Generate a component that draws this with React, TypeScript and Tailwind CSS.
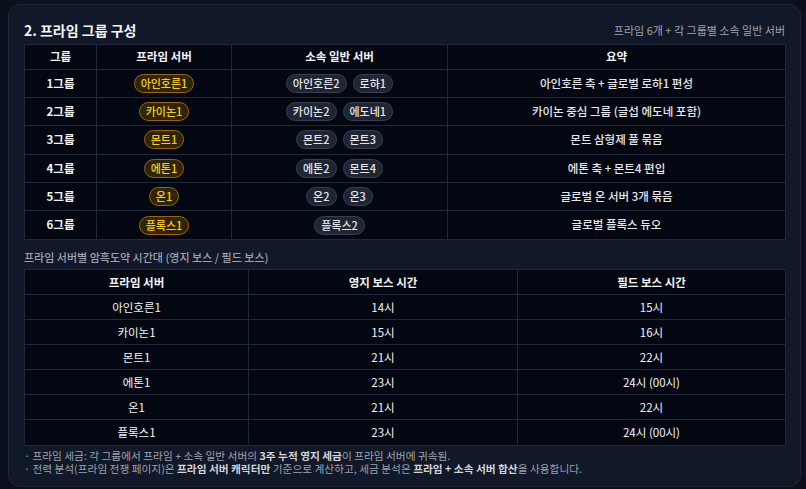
import React from "react";

const font = { fontFamily: '"Noto Sans CJK KR", "Noto Sans", sans-serif' };

const groups = [
  { g: "1그룹", p: "아인호른1", s: ["아인호른2", "로하1"], d: "아인호른 축 + 글로벌 로하1 편성" },
  { g: "2그룹", p: "카이논1", s: ["카이논2", "에도네1"], d: "카이논 중심 그룹 (글섭 에도네 포함)" },
  { g: "3그룹", p: "몬트1", s: ["몬트2", "몬트3"], d: "몬트 삼형제 풀 묶음" },
  { g: "4그룹", p: "에톤1", s: ["에톤2", "몬트4"], d: "에톤 축 + 몬트4 편입" },
  { g: "5그룹", p: "온1", s: ["온2", "온3"], d: "글로벌 온 서버 3개 묶음" },
  { g: "6그룹", p: "플록스1", s: ["플록스2"], d: "글로벌 플록스 듀오" },
];

const times = [
  ["아인호른1", "14시", "15시"],
  ["카이논1", "15시", "16시"],
  ["몬트1", "21시", "22시"],
  ["에톤1", "23시", "24시 (00시)"],
  ["온1", "21시", "22시"],
  ["플록스1", "23시", "24시 (00시)"],
];

function Prime({ children }: { children: React.ReactNode }) {
  return (
    <span className="inline-flex h-[19px] items-center rounded-full border border-[#a16207] bg-[#2e2406] px-[6px] text-[11px] leading-none font-medium text-[#facc15]">
      {children}
    </span>
  );
}

function Normal({ children }: { children: React.ReactNode }) {
  return (
    <span className="inline-flex h-[19px] items-center rounded-full border border-[#374151] bg-[#1e2533] px-[6px] text-[11px] leading-none font-medium text-[#e5e7eb]">
      {children}
    </span>
  );
}

export default function App() {
  return (
    <div className="h-[489px] w-[806px] overflow-hidden bg-[#0b101c] pl-2 pt-1 text-[#e5e7eb]" style={font}>
      <div className="h-[483px] w-[793px] rounded-[12px] border border-[#1f2636] bg-[#111827] px-[15px] pt-[12px]">
        <div className="flex h-[26px] items-center justify-between">
          <div className="text-[14px] font-bold leading-none text-[#f3f4f6]">2. 프라임 그룹 구성</div>
          <div className="text-[11px] leading-none text-[#9ca3af]">프라임 6개 + 각 그룹별 소속 일반 서버</div>
        </div>

        <div className="mt-[1px] w-[762px] border border-[#1f2937] bg-[#030712] text-[11.5px] font-medium">
          <div className="grid h-[25px] grid-cols-[72px_135px_216px_1fr] border-b border-[#1f2937] font-bold text-[#f3f4f6]">
            <div className="flex items-center justify-center border-r border-[#1f2937]">그룹</div>
            <div className="flex items-center justify-center border-r border-[#1f2937]">프라임 서버</div>
            <div className="flex items-center justify-center border-r border-[#1f2937]">소속 일반 서버</div>
            <div className="flex items-center justify-center">요약</div>
          </div>
          {groups.map((r, i) => (
            <div
              key={r.g}
              className={`grid h-[28.2px] grid-cols-[72px_135px_216px_1fr] ${i < groups.length - 1 ? "border-b border-[#1f2937]" : ""}`}
            >
              <div className="flex items-center justify-center border-r border-[#1f2937] font-bold text-[#f3f4f6]">{r.g}</div>
              <div className="flex items-center justify-center border-r border-[#1f2937]">
                <Prime>{r.p}</Prime>
              </div>
              <div className="flex items-center justify-center gap-[6px] border-r border-[#1f2937]">
                {r.s.map((s) => (
                  <Normal key={s}>{s}</Normal>
                ))}
              </div>
              <div className="flex items-center justify-center text-[#e5e7eb]">{r.d}</div>
            </div>
          ))}
        </div>

        <div className="mt-[7px] h-[20px] text-[11px] font-medium leading-[20px] text-[#9ca3af]">
          프라임 서버별 암흑도약 시간대 (영지 보스 / 필드 보스)
        </div>

        <div className="mt-[2px] w-[762px] border border-[#1f2937] bg-[#030712] text-[11.5px]">
          <div className="grid h-[25px] grid-cols-[224px_269px_1fr] border-b border-[#1f2937] font-bold text-[#f3f4f6]">
            <div className="flex items-center justify-center border-r border-[#1f2937]">프라임 서버</div>
            <div className="flex items-center justify-center border-r border-[#1f2937]">영지 보스 시간</div>
            <div className="flex items-center justify-center">필드 보스 시간</div>
          </div>
          {times.map((r, i) => (
            <div
              key={r[0]}
              className={`grid h-[25px] grid-cols-[224px_269px_1fr] ${i < times.length - 1 ? "border-b border-[#1f2937]" : ""}`}
            >
              <div className="flex items-center justify-center border-r border-[#1f2937] text-[#f3f4f6]">{r[0]}</div>
              <div className="flex items-center justify-center border-r border-[#1f2937] text-[#f3f4f6]">{r[1]}</div>
              <div className="flex items-center justify-center text-[#f3f4f6]">{r[2]}</div>
            </div>
          ))}
        </div>

        <div className="mt-[3px] text-[10.7px] leading-[13px] text-[#9ca3af]">
          <div className="h-[13px]">
            · 프라임 세금: 각 그룹에서 프라임 + 소속 일반 서버의 <b className="text-[#d1d5db]">3주 누적 영지 세금</b>이 프라임 서버에 귀속됨.
          </div>
          <div className="h-[13px]">
            · 전력 분석(프라임 전쟁 페이지)은 <b className="text-[#d1d5db]">프라임 서버 캐릭터만</b> 기준으로 계산하고, 세금 분석은{" "}
            <b className="text-[#d1d5db]">프라임 + 소속 서버 합산</b>을 사용합니다.
          </div>
        </div>
      </div>
    </div>
  );
}
